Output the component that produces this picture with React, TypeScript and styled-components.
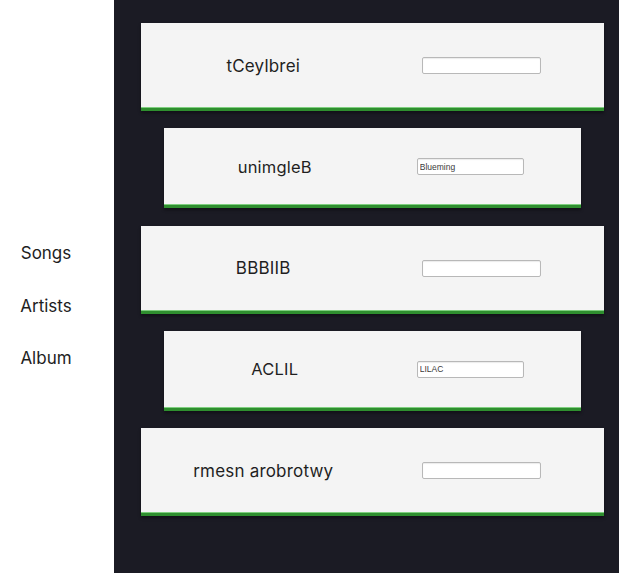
import React from "react";
import styled, { createGlobalStyle } from "styled-components";

const GlobalStyle = createGlobalStyle`
    html, body {
        margin: 0;
        padding: 0;
        height: 100%;
        overflow: hidden;
    }
    body {
        font-family: "Inter", "Noto Sans", sans-serif;
    }
`;

const Layout = styled.div`
    display: flex;
    height: 100vh;
`;

const SideNav = styled.nav`
    width: 114px;
    flex-shrink: 0;
    background: #ffffff;
    display: flex;
    flex-direction: column;
    padding-top: 242px;
    gap: 30.5px;
    box-sizing: border-box;
`;

const NavItem = styled.a`
    width: 92px;
    text-align: center;
    font-size: 17px;
    line-height: 22px;
    color: #1e1e1e;
    cursor: pointer;
`;

const Board = styled.main`
    flex: 1;
    background: #1b1b24;
    padding: 23px 0 0 27px;
    display: flex;
    flex-direction: column;
    gap: 17.3px;
`;

const Card = styled.div<{ $narrow?: boolean }>`
    box-sizing: border-box;
    width: ${p => (p.$narrow ? 417 : 463)}px;
    height: ${p => (p.$narrow ? 80 : 88)}px;
    margin-left: ${p => (p.$narrow ? 23 : 0)}px;
    padding: 0 13px;
    background: #f4f4f4;
    border-bottom: 3px solid #2f8f2f;
    box-shadow: inset 0 -1px 0 #7fcf7f, 0 2px 3px rgba(0, 0, 0, 0.4);
    display: grid;
    grid-template-columns: 1fr 1fr;
    align-items: center;
    justify-items: center;
`;

const Scrambled = styled.span<{ $narrow?: boolean }>`
    font-size: ${p => (p.$narrow ? 16.5 : 17)}px;
    color: #1f1f1f;
    letter-spacing: 0.2px;
`;

const Guess = styled.input<{ $narrow?: boolean }>`
    box-sizing: border-box;
    width: ${p => (p.$narrow ? 107 : 119)}px;
    height: 17px;
    padding: 0 2px;
    border: 1px solid #b8b8b8;
    border-radius: 2px;
    background: #ffffff;
    font-family: "Liberation Sans", Arial, sans-serif;
    font-size: 8.5px;
    color: #3a3a3a;
    box-shadow: inset 0 1px 1px rgba(0, 0, 0, 0.08);
`;

const words = [
    { scrambled: "tCeylbrei", value: "" },
    { scrambled: "unimgleB", value: "Blueming" },
    { scrambled: "BBBIIB", value: "" },
    { scrambled: "ACLIL", value: "LILAC" },
    { scrambled: "rmesn arobrotwy", value: "" },
];

export default function App() {
    return (
        <Layout>
            <GlobalStyle />
            <SideNav>
                <NavItem>Songs</NavItem>
                <NavItem>Artists</NavItem>
                <NavItem>Album</NavItem>
            </SideNav>
            <Board>
                {words.map((w, i) => {
                    const narrow = i % 2 === 1;
                    return (
                        <Card key={w.scrambled} $narrow={narrow}>
                            <Scrambled $narrow={narrow}>{w.scrambled}</Scrambled>
                            <Guess $narrow={narrow} defaultValue={w.value} />
                        </Card>
                    );
                })}
            </Board>
        </Layout>
    );
}
